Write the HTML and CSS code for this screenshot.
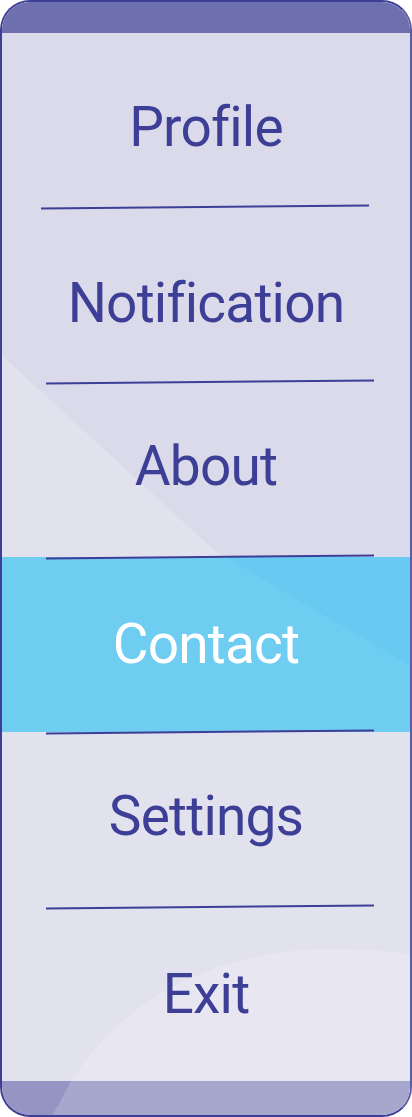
FILE: index.html
```html
<!DOCTYPE html>
<html lang="en">
<head>
<meta charset="utf-8">
<title>Menu</title>
<link rel="stylesheet" href="styles.css">
</head>
<body>
<div class="phone">
  <svg class="bg" width="412" height="1117" viewBox="0 0 412 1117" aria-hidden="true">
    <path class="bg-dark" d="M0,0 H412 V667 L215,551 L0,354 Z"/>
    <path class="bg-arc" d="M52,1117 C110,990 230,948 335,949 C370,949 395,952 412,955 L412,1117 Z"/>
  </svg>
  <div class="band band-top"></div>
  <nav class="menu">
    <div class="item item-profile"><span class="label">Profile</span></div>
    <div class="item item-notification"><span class="label">Notification</span></div>
    <div class="item item-about"><span class="label">About</span></div>
    <div class="item item-contact is-active"><span class="label">Contact</span></div>
    <div class="item item-settings"><span class="label">Settings</span></div>
    <div class="item item-exit"><span class="label">Exit</span></div>
  </nav>
  <div class="band band-bottom"></div>
</div>
</body>
</html>
```

FILE: styles.css
```css
html, body {
  margin: 0;
  padding: 0;
  background: #ffffff;
}

.phone {
  position: relative;
  z-index: 0;
  width: 412px;
  height: 1117px;
  box-sizing: border-box;
  border: 2px solid #3d3f96;
  border-right-color: #5a5ca6;
  border-radius: 30px;
  overflow: hidden;
  background: #e2e1ee;
  display: flex;
  flex-direction: column;
  font-family: Roboto, "Noto Sans", sans-serif;
}

.bg {
  position: absolute;
  top: -2px;
  left: -2px;
  z-index: -1;
  display: block;
}

.bg-dark { fill: #dbdaea; }
.bg-arc { fill: #e7e6f1; }

.band-top {
  height: 31px;
  flex: none;
  background: #6d6fae;
}

.band-bottom {
  height: 34px;
  flex: none;
  background: linear-gradient(118deg, #9594c3 61px, #a6a7cc 61px);
}

.menu {
  display: flex;
  flex-direction: column;
  flex: none;
}

.item {
  position: relative;
  height: 175px;
  box-sizing: border-box;
  display: flex;
  align-items: center;
  justify-content: center;
}

.item::after {
  content: "";
  position: absolute;
  left: 44px;
  width: 328px;
  height: 2px;
  bottom: -1px;
  background: #3d3f96;
  transform: rotate(-0.5deg);
  z-index: 2;
}

.item-exit::after { display: none; }

.item-profile {
  height: 174px;
  padding-top: 14px;
}
.item-profile::after { left: 39px; }

.item-notification { padding-top: 18px; }
.item-about { padding-bottom: 7px; }
.item-settings { padding-bottom: 6px; }
.item-exit { height: 174px; }

.is-active {
  background: linear-gradient(30.5deg, #70cdf2 264px, #68caf0 264px);
}

.label {
  font-size: 55px;
  letter-spacing: -0.8px;
  line-height: 1;
  font-weight: 400;
  color: #3d3f96;
  white-space: nowrap;
}

.is-active .label {
  color: #ffffff;
}
```
